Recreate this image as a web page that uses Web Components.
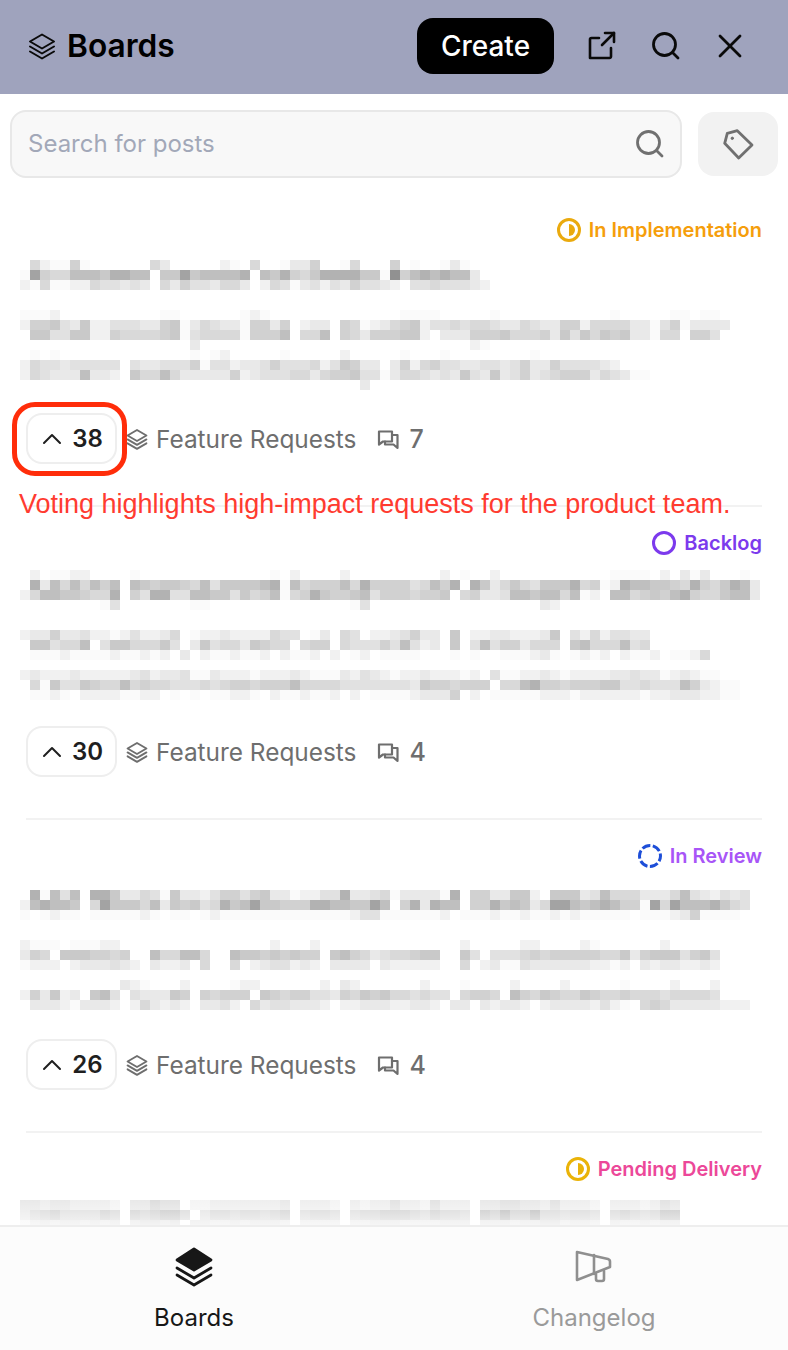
<!DOCTYPE html>
<html>
<head>
<meta charset="utf-8">
<title>Boards</title>
<style>
  html, body { margin: 0; padding: 0; background: #fff; }
  body { font-family: Inter, "Liberation Sans", sans-serif; height: 1350px; overflow: hidden; }
</style>
</head>
<body>
<feedback-app>
  <board-post status="In Implementation" text-color="#f59e0b" ring-color="#eaaa0e" ring="half" votes="38" comments="7" shift="18">
    <pixel-text rows=".521161... ...53..... 21.5..1336 ..15...6.1 ..131|1a65588879 988.77a788 889.879657 9999771b68 989883|2151122544 343.536443 553.254134 2436443 2.4 4544432|-|-|1112...... ....11.... ..121..... ........11 11.....1.. .........1 .....11.11|2667437224 4433671354 3316636.23 3.65123567 2445455433 5433662555 53314613333|.774477226 5555671455 5516668.55 8.65366677 2.33366675 5563747576 733155.664|.......... .......3.. .......... .......... .....21|.1.1...... .......1.1 2.....1... ..2.....1. ..1....... .1|2544344444 .433444614 4233464445 247633.362 5644334434 6336444432|2543338332 .755853333 3623444553 5667441355 4343743734 6345666354 311|.......... .......... .......... ....3"></pixel-text>
  </board-post>
  <board-post status="Backlog" text-color="#7c3aed" ring-color="#7c3aed" ring="open" votes="30" comments="4" shift="15">
    <pixel-text rows=".2.1122... .1........ .....1.2.. ..2....... ..2.1..2.. .........1 111.2.313. ..1|.938585868 .876776584 7777891856 6685966664 5869.97357 5477795612 9887765965 7983|2588776559 .649944887 7475681569 7667846665 667.563348 87885812.8 8567689655 7883|........14 .......11. .......... ...14..... .......... ..32|-|-|2336334221 242235.122 32222544.1 3.54.22346 33.7.22332 2237.42524 433|.774558.47 755574.374 5537655.56 6.54446484 23.7.48466 3555.78555 845|.111211112 11212.3.21 12112.2112 .2.12.1111 ...1.1..11 1231.1212. 2112.1125|-|2322232222 2342334113 2221222321 1132432122 322212.411 2232122223 3433123211|.517447655 8565544454 5665666855 5544444443 7665666.55 8966566677 4454448632 11|.1121.2222 1122.1.1.1 1221.21121 12.2.11112 3336.2.111 1122212222 2212233322 11"></pixel-text>
  </board-post>
  <board-post status="In Review" text-color="#a855f7" ring-color="#1d4ed8" ring="dashed" votes="26" comments="4" shift="22">
    <pixel-text rows=".91848.997 3354173324 6646733122 4493345133 3319.66337 72.7773485 5533358432 434|289887.5a7 7758376745 978a776669 98877a8.69 3988.66978 735aa87898 661a5a8889 754|1.1211.111 1121.11.12 1111111111 1112441111 112.111211 2112121111 1.11123611 11|-|-|2111.11122 .......... .....2...2 .......... ....2..... 22....21.. ....2....|365.777665 6..855885. .877676766 .786534556 77..74.444 5656666655 7367774674|1222.23334 32.3223.5. .5.2344232 .3333.3222 22..5.2311 4333333221 2.32332232|-|.......... 321...2... .122...... 2.32...... 2...1....2 ....2..... 1....2...2|263723.784 .433376.65 666.765664 4365767554 544.5665.8 6576557655 6555455554|.333213332 .25323 2.33 42.5344333 2.22333223 32.33.3233 2.23333242 1.56533333 222"></pixel-text>
  </board-post>
  <board-post status="Pending Delivery" text-color="#ec4899" ring-color="#eab308" ring="half" shift="19">
    <pixel-text rows="4434433332 .44655.223 3333334.33 32.3233533 25333.4455 44353332.3 332354|4678666687 .878997.57 7677678.67 76.6778887 68776.98a8 8a776776.7 876799|2454554545 .56656.554 4545554.44 44.4455544 44555.5554 55664554.5 445455"></pixel-text>
  </board-post>
</feedback-app>

<script>
  const ICONS = {
    stack: `<path d="M14 2.5 26 9.5 14 16.5 2 9.5Z"/><path d="M2 14.5 14 21.5 26 14.5"/><path d="M2 19.5 14 26.5 26 19.5"/>`,
    search: `<circle cx="14.5" cy="14.5" r="11"/><path d="M22.5 22.5 28 28"/>`
  };

  class BoardHeader extends HTMLElement {
    constructor() {
      super();
      this.attachShadow({ mode: "open" });
    }
    connectedCallback() {
      this.shadowRoot.innerHTML = `
        <style>
          :host { display: flex; align-items: center; height: 94px; background: #9fa3bd; padding: 0 42px 2px 28px; box-sizing: border-box; color: #000; }
          .title { display: flex; align-items: center; gap: 11px; font-size: 31.700px; font-weight: 600; flex: 1; }
          .title span { margin-top: -2px; }
          svg { display: block; fill: none; stroke: #0a0a0a; stroke-width: 2; stroke-linecap: round; stroke-linejoin: round; }
          .create { width: 137px; height: 56px; border-radius: 16px; background: #000; color: #fff; font-size: 28px; font-weight: 500; display: flex; align-items: center; justify-content: center; margin-right: 32px; }
          .icons { display: flex; gap: 32px; }
        </style>
        <div class="title">
          <svg width="28" height="28" viewBox="0 0 28 28" stroke-width="2">${ICONS.stack}</svg>
          <span>Boards</span>
        </div>
        <div class="create">Create</div>
        <div class="icons">
          <svg width="32" height="32" viewBox="0 0 32 32" style="stroke-width:2.6">
            <path d="M13 8H5.500a1.500 1.500 0 0 0-1.500 1.500V28h19.500a1.500 1.500 0 0 0 1.500-1.500V18"/><path d="M16 15 28 3"/><path d="M19 3h9v9"/>
          </svg>
          <svg width="32" height="32" viewBox="0 0 32 32" style="stroke-width:2.800">${ICONS.search}</svg>
          <svg width="32" height="32" viewBox="0 0 32 32" style="stroke-width:2.800"><path d="M6 6 26 26"/><path d="M26 6 6 26"/></svg>
        </div>
      `;
    }
  }

  class PostSearch extends HTMLElement {
    constructor() {
      super();
      this.attachShadow({ mode: "open" });
    }
    connectedCallback() {
      this.shadowRoot.innerHTML = `
        <style>
          :host { display: flex; align-items: center; gap: 16px; padding: 16px 10px; }
          .box { flex: 1; height: 68px; box-sizing: border-box; background: #f8f8f8; border: 2px solid #e8e8e8; border-radius: 16px; display: flex; align-items: center; justify-content: space-between; padding: 0 14px 0 16px; color: #a2a8b8; font-size: 24px; }
          .box span { margin-top: -2px; }
          .tag { width: 80px; height: 64px; background: #f2f2f2; border-radius: 16px; display: flex; align-items: center; justify-content: center; }
          svg { display: block; fill: none; stroke: #707070; stroke-width: 2.800; stroke-linecap: round; stroke-linejoin: round; }
        </style>
        <div class="box">
          <span>Search for posts</span>
          <svg width="32" height="32" viewBox="0 0 32 32">${ICONS.search}</svg>
        </div>
        <div class="tag">
          <svg width="32" height="32" viewBox="0 0 32 32">
            <path d="M2.700 15.300 5.300 5.300 15.300 2.700 30 17 16.700 30Z"/>
            <circle cx="10.300" cy="10.300" r="1.200" fill="#707070" stroke-width="1"/>
          </svg>
        </div>
      `;
    }
  }

  // mosaic over the unreadable text, one character per 10px cell
  const SHADES = { "1": "#fafafa", "2": "#f1f1f1", "3": "#e9e9e9", "4": "#e1e1e1", "5": "#d9d9d9", "6": "#d1d1d1", "7": "#c9c9c9", "8": "#bfbfbf", "9": "#b2b2b2", a: "#a3a3a3", b: "#919191" };

  class PixelText extends HTMLElement {
    constructor() {
      super();
      this.attachShadow({ mode: "open" });
    }
    connectedCallback() {
      const rows = this.getAttribute("rows").split("|");
      let cells = "";
      rows.forEach((row, y) => {
        [...row.replace(/ /g, "")].forEach((c, x) => {
          if (SHADES[c]) cells += `<rect x="${x * 10}" y="${y * 10}" width="10" height="10" fill="${SHADES[c]}"/>`;
        });
      });
      this.shadowRoot.innerHTML = `
        <style>
          :host { display: block; margin-left: -6px; }
          svg { display: block; shape-rendering: crispEdges; }
        </style>
        <svg width="760" height="${rows.length * 10}">${cells}</svg>
      `;
    }
  }

  class BoardPost extends HTMLElement {
    constructor() {
      super();
      this.attachShadow({ mode: "open" });
    }
    ringIcon() {
      const ring = this.getAttribute("ring");
      const color = this.getAttribute("ring-color");
      let inner = "";
      let dash = "";
      if (ring === "half") inner = `<path d="M12 6a6 6 0 0 1 0 12Z" fill="${color}"/>`;
      if (ring === "dashed") dash = `stroke-dasharray="8.500 2.500" stroke-dashoffset="3"`;
      return `<svg width="24" height="24" viewBox="0 0 24 24"><circle cx="12" cy="12" r="10.500" fill="none" stroke="${color}" stroke-width="3" ${dash}/>${inner}</svg>`;
    }
    metaRow() {
      // the last post runs under the tab bar, its row is never on screen
      if (!this.hasAttribute("votes")) return "";
      return `
        <div class="meta">
          <div class="vote">
            <svg class="line" width="20" height="20" viewBox="0 0 20 20" stroke="#1f1f1f" stroke-width="2"><path d="M2 14 10 6 18 14"/></svg>
            <span>${this.getAttribute("votes")}</span>
          </div>
          <svg class="line" width="22" height="24" viewBox="0 0 28 28" stroke="#6e6e6e" stroke-width="2.400">${ICONS.stack}</svg>
          <span class="cat">Feature Requests</span>
          <svg class="line chat" width="22" height="22" viewBox="0 0 22 22" stroke="#6e6e6e" stroke-width="2.200">
            <path d="M2 3.500h13v10H6l-4 3Z"/><path d="M15 7h5.500v13l-4-3.500H8V13.500"/>
          </svg>
          <span class="count">${this.getAttribute("comments")}</span>
        </div>
      `;
    }
    connectedCallback() {
      this.shadowRoot.innerHTML = `
        <style>
          :host { display: block; margin: 0 26px; height: 313px; box-sizing: border-box; padding-top: 24px; border-bottom: 2px solid #f2f2f2; }
          .status { display: flex; justify-content: flex-end; align-items: center; gap: 8px; height: 24px; font-size: 20px; font-weight: 600; color: ${this.getAttribute("text-color")}; }
          svg { display: block; }
          .body { height: 171px; box-sizing: border-box; padding-top: ${this.getAttribute("shift")}px; }
          .meta { display: flex; align-items: center; height: 51px; color: #6e6e6e; font-size: 24.400px; }
          .vote { width: 91px; height: 51px; box-sizing: border-box; border: 2px solid #eeeeee; border-radius: 16px; display: flex; align-items: center; justify-content: center; gap: 10px; padding-left: 2px; color: #1f1f1f; font-size: 24px; font-weight: 600; margin-right: 9px; }
          .cat { margin-left: 8px; }
          .count { margin-left: 10px; font-size: 25px; font-weight: 500; }
          .chat { margin-left: 21px; }
          .line { fill: none; stroke-linecap: round; stroke-linejoin: round; }
        </style>
        <div class="status">${this.ringIcon()}<span>${this.getAttribute("status")}</span></div>
        <div class="body"><slot></slot></div>
        ${this.metaRow()}
      `;
    }
  }

  class TabBar extends HTMLElement {
    constructor() {
      super();
      this.attachShadow({ mode: "open" });
    }
    connectedCallback() {
      this.shadowRoot.innerHTML = `
        <style>
          :host { display: grid; grid-template-columns: 388px 1fr; height: 125px; box-sizing: border-box; border-top: 2px solid #eeeeee; background: #fcfcfc; position: relative; }
          :host::before { content: ""; position: absolute; left: 0; right: 0; top: -40px; height: 38px; background: linear-gradient(rgba(255,255,255,0), rgba(255,255,255,0.75)); }
          .tab { display: flex; flex-direction: column; align-items: center; padding-top: 20px; box-sizing: border-box; font-size: 24px; color: #171717; }
          .tab.off { color: #9a9a9a; padding-left: 12px; }
          .tab svg { display: block; height: 40px; margin-bottom: 16px; fill: none; stroke-linecap: round; stroke-linejoin: round; }
        </style>
        <div class="tab">
          <svg width="38" height="40" viewBox="0 0 38 40" stroke="#171717" stroke-width="2.800">
            <path d="M19 2 36 13 19 23 2 13Z" fill="#171717"/><path d="M2 21 19 31 36 21"/><path d="M2 28 19 38 36 28"/>
          </svg>
          <span>Boards</span>
        </div>
        <div class="tab off">
          <svg width="38" height="40" viewBox="0 0 38 40" stroke="#8f8f8f" stroke-width="2.600">
            <path d="M2 5V33L35 20V15A3 3 0 0 0 33 12Z" stroke-linejoin="round"/><path d="M19 8V27"/><path d="M21 27v5a2 2 0 0 0 2 2h4a2 2 0 0 0 2-2v-8"/>
          </svg>
          <span>Changelog</span>
        </div>
      `;
    }
  }

  class FeedbackApp extends HTMLElement {
    constructor() {
      super();
      this.attachShadow({ mode: "open" });
    }
    connectedCallback() {
      this.shadowRoot.innerHTML = `
        <style>
          :host { display: flex; flex-direction: column; height: 1350px; position: relative; overflow: hidden; background: #fff; }
          .scroll { flex: 1; min-height: 0; overflow: hidden; }
          .mark { position: absolute; left: 12px; top: 402px; width: 115px; height: 74px; box-sizing: border-box; border: 5px solid #ff2d0a; border-radius: 23px; }
          .note { position: absolute; left: 19px; top: 488px; font: 27px "Liberation Sans", Arial, sans-serif; line-height: 32px; color: #ff3b30; white-space: nowrap; }
        </style>
        <board-header></board-header>
        <post-search></post-search>
        <div class="scroll"><slot></slot></div>
        <tab-bar></tab-bar>
        <div class="mark"></div>
        <div class="note">Voting highlights high-impact requests for the product team.</div>
      `;
    }
  }

  customElements.define("board-header", BoardHeader);
  customElements.define("post-search", PostSearch);
  customElements.define("pixel-text", PixelText);
  customElements.define("board-post", BoardPost);
  customElements.define("tab-bar", TabBar);
  customElements.define("feedback-app", FeedbackApp);
</script>
</body>
</html>
